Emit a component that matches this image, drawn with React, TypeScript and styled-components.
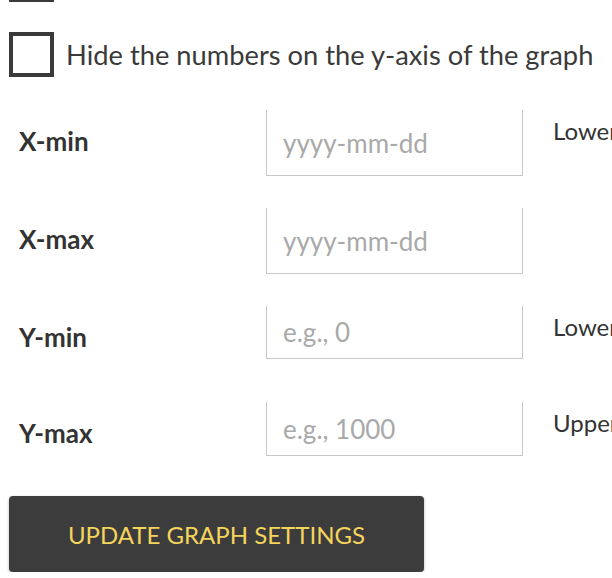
import React from "react";
import styled, {createGlobalStyle} from "styled-components";

const GlobalStyle = createGlobalStyle`
  html, body {
    margin: 0;
    overflow: hidden;
    background: #fff;
  }
  body {
    font-family: "Lato", "Open Sans", sans-serif;
    color: #333;
  }
`;

const Page = styled.div`
  display: flex;
  flex-direction: column;
  align-items: flex-start;
  padding-left: 9px;
  margin-top: -43px;
  width: 900px;
`;

const CheckRow = styled.label`
  display: flex;
  align-items: center;
  gap: 12px;
  margin-bottom: 30px;
`;

const Box = styled.span`
  width: 45px;
  height: 45px;
  box-sizing: border-box;
  border: 4px solid #3a3a3a;
  flex-shrink: 0;
`;

const CheckText = styled.span`
  font-size: 27.3px;
  color: #3a3a3a;
`;

const Fields = styled.div`
  margin-top: 3px;
  padding-left: 10px;
`;

const FieldRow = styled.div<{ $h: number }>`
  display: grid;
  grid-template-columns: 247px 257px max-content;
  align-items: start;
  height: ${p => p.$h}px;
`;

const Label = styled.div`
  font-size: 26px;
  font-weight: 700;
  color: #333;
  padding-top: 15px;
`;

const Input = styled.input<{ $h: number }>`
  box-sizing: border-box;
  width: 257px;
  height: ${p => p.$h}px;
  margin: 0;
  border: 1px solid #c8c8c8;
  border-top: 0;
  border-radius: 0;
  padding: 0 0 0 16px;
  font-family: inherit;
  font-size: 26px;
  color: #333;
  background: #fff;
  outline: none;

  &::placeholder {
    color: #a9a9a9;
  }
`;

const Note = styled.div`
  font-size: 24px;
  color: #333;
  padding: 6px 0 0 30px;
  white-space: nowrap;
`;

const Button = styled.button`
  display: block;
  width: 415px;
  height: 76px;
  border: 0;
  border-radius: 4px;
  background: #3c3c3c;
  color: #f5d45c;
  font-family: inherit;
  font-size: 24px;
  text-transform: uppercase;
  box-shadow: 0 1px 3px rgba(0, 0, 0, 0.3);
  cursor: pointer;
`;

interface Field {
  label : string;
  placeholder : string;
  note : string;
  inputHeight : number;
  rowHeight : number;
}

const fields : Field[] = [
  {label: "X-min", placeholder: "yyyy-mm-dd", note: "Lower bound", inputHeight: 66, rowHeight: 98},
  {label: "X-max", placeholder: "yyyy-mm-dd", note: "", inputHeight: 66, rowHeight: 98},
  {label: "Y-min", placeholder: "e.g., 0", note: "Lower bound", inputHeight: 53, rowHeight: 96},
  {label: "Y-max", placeholder: "e.g., 1000", note: "Upper bound", inputHeight: 54, rowHeight: 94},
];

const App = () => {
  return (
    <Page>
      <GlobalStyle />
      <CheckRow>
        <Box />
      </CheckRow>
      <CheckRow>
        <Box />
        <CheckText>Hide the numbers on the y-axis of the graph</CheckText>
      </CheckRow>
      <Fields>
        {fields.map((f, index) => {
          return (
            <FieldRow key={index} $h={f.rowHeight}>
              <Label>{f.label}</Label>
              <Input $h={f.inputHeight} placeholder={f.placeholder} />
              <Note>{f.note}</Note>
            </FieldRow>
          );
        })}
      </Fields>
      <Button>Update graph settings</Button>
    </Page>
  );
};

export default App;
